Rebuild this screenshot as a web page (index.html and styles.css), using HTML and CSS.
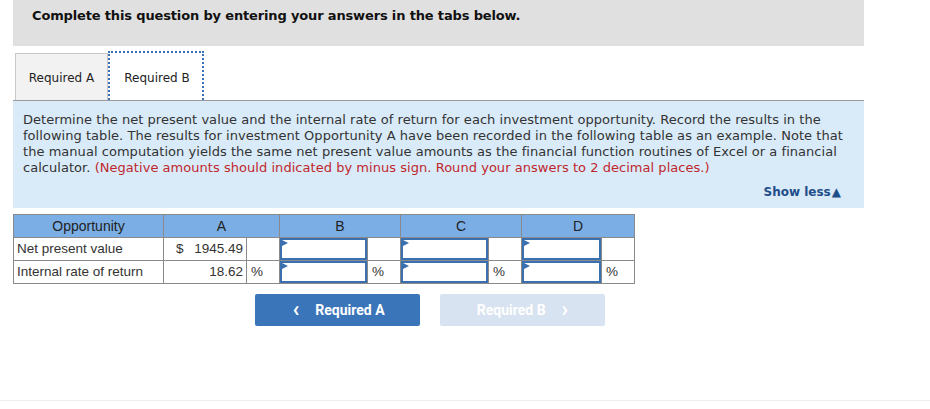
FILE: index.html
```html
<!DOCTYPE html>
<html>
<head>
<meta charset="utf-8">
<link rel="stylesheet" href="styles.css">
</head>
<body>
<div class="wrap">
  <div class="header">Complete this question by entering your answers in the tabs below.</div>
  <div class="tabs">
    <div class="tab tab-a">Required A</div>
    <div class="tab tab-b">Required B</div>
  </div>
  <div class="panel">
    <p class="prompt">Determine the net present value and the internal rate of return for each investment opportunity. Record the results in the following table. The results for investment Opportunity A have been recorded in the following table as an example. Note that the manual computation yields the same net present value amounts as the financial function routines of Excel or a financial calculator. <span class="red">(Negative amounts should indicated by minus sign. Round your answers to 2 decimal places.)</span></p>
    <div class="showless">Show less<span class="tri">&#9650;</span></div>
  </div>
  <table class="grid">
    <colgroup>
      <col class="c-opp"><col class="c-aval"><col class="c-unit"><col class="c-inb"><col class="c-unit"><col class="c-inb"><col class="c-unit"><col class="c-ind"><col class="c-unit">
    </colgroup>
    <thead>
      <tr><th>Opportunity</th><th colspan="2">A</th><th colspan="2">B</th><th colspan="2">C</th><th colspan="2">D</th></tr>
    </thead>
    <tbody>
      <tr>
        <td class="lbl">Net present value</td>
        <td class="val"><span class="dollar">$</span>1945.49</td><td></td>
        <td class="inp"><div class="box"></div></td><td></td>
        <td class="inp"><div class="box"></div></td><td></td>
        <td class="inp"><div class="box"></div></td><td></td>
      </tr>
      <tr>
        <td class="lbl">Internal rate of return</td>
        <td class="val">18.62</td><td class="unit">%</td>
        <td class="inp"><div class="box"></div></td><td class="unit">%</td>
        <td class="inp"><div class="box"></div></td><td class="unit">%</td>
        <td class="inp"><div class="box"></div></td><td class="unit">%</td>
      </tr>
    </tbody>
  </table>
  <div class="nav">
    <button class="btn btn-prev"><span class="chev">&lsaquo;</span>Required A</button>
    <button class="btn btn-next">Required B<span class="chev chev-r">&rsaquo;</span></button>
  </div>
</div>
<div class="bottomline"></div>
</body>
</html>
```
FILE: styles.css
```css
html, body { margin: 0; padding: 0; background: #fff; }
body { font-family: "DejaVu Sans", Verdana, sans-serif; color: #222; }
.wrap { margin-left: 13px; width: 851px; }
.header {
  background: #e0e0e0;
  height: 46px;
  box-sizing: border-box;
  padding: 8px 0 0 19px;
  font-size: 13px;
  font-weight: bold;
  color: #111;
  line-height: 16px;
  letter-spacing: -0.15px;
}
.tabs {
  display: flex;
  align-items: flex-end;
  margin-top: 5px;
  height: 49px;
  border-bottom: 1px solid #9a9a9a;
  padding-left: 2px;
}
.tab {
  font-size: 12px;
  color: #222;
  box-sizing: border-box;
  display: flex;
  align-items: center;
  justify-content: center;
}
.tab-a {
  width: 93px;
  height: 47px;
  background: #f2f2f2;
  border: 1px solid #c8c8c8;
  border-bottom: none;
  padding-top: 1px;
}
.tab-b {
  width: 96px;
  height: 49px;
  background: #fff;
  border: 2px dotted #3a70b5;
  border-bottom: none;
  padding-top: 2px;
  padding-left: 2px;
}
.panel {
  background: #d9ebf9;
  height: 107px;
  box-sizing: border-box;
  padding: 11px 20px 0 10px;
}
.prompt {
  margin: 0;
  font-size: 13px;
  line-height: 16px;
  color: #333;
  letter-spacing: 0.04px;
}
.red { color: #c0272d; }
.showless {
  text-align: right;
  margin-top: 8px;
  margin-right: 3px;
  font-size: 12px;
  font-weight: bold;
  color: #1f4d8a;
  line-height: 16px;
}
.tri { font-size: 12px; margin-left: 1px; }
.grid {
  margin-top: 6px;
  border-collapse: collapse;
  table-layout: fixed;
  width: 621px;
  font-family: "Liberation Sans", Arial, sans-serif;
  font-size: 13.5px;
  color: #333;
}
.c-opp { width: 150px; }
.c-aval { width: 83px; }
.c-unit { width: 33px; }
.c-inb { width: 88px; }
.c-ind { width: 80px; }
.grid tr { height: 23px; }
.grid th, .grid td {
  border: 1px solid #8a8a8a;
  height: 21px;
  line-height: 18px;
  padding: 0;
}
.grid th {
  background: #7baee5;
  font-weight: normal;
  font-size: 14px;
  color: #222;
  text-align: center;
}
.grid td.lbl { padding-left: 3px; }
.grid td.val { text-align: right; padding-right: 3px; }
.dollar { float: left; margin-left: 12px; }
.grid td.unit { padding-left: 4px; }
.grid td.inp { position: relative; }
.box {
  position: absolute;
  inset: 0;
  border: 2px solid #3a6fb0;
  background: #fff;
}
.box::before {
  content: "";
  position: absolute;
  left: 0;
  top: 0;
  border-left: 6px solid #3a6fb0;
  border-top: 3px solid transparent;
  border-bottom: 3px solid transparent;
}
.nav {
  display: flex;
  gap: 20px;
  margin-top: 10px;
  margin-left: 242px;
}
.btn {
  width: 165px;
  height: 32px;
  border: none;
  border-radius: 2px;
  font-family: Roboto, sans-serif;
  font-weight: bold;
  font-size: 14px;
  color: #fff;
  display: flex;
  align-items: center;
  justify-content: center;
  padding: 0;
}
.btn-prev { background: #3a75b9; padding-left: 2px; }
.btn-next { background: #d7e3f0; }
.chev { font-size: 22px; line-height: 14px; margin-right: 16px; position: relative; top: -1px; }
.chev-r { margin-right: 0; margin-left: 16px; }
.bottomline {
  margin-top: 74px;
  border-top: 1px solid #eeeeee;
}
```
